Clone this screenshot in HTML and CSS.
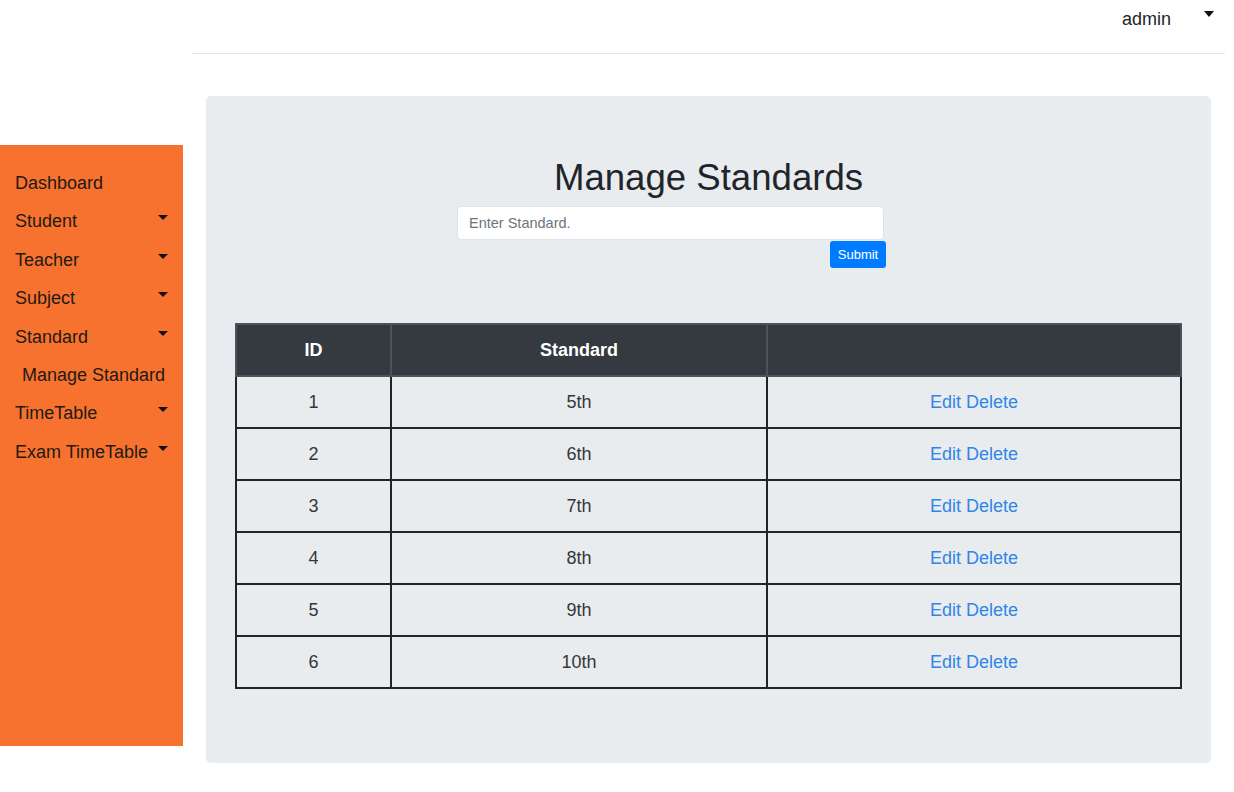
FILE: index.html
```html
<!DOCTYPE html>
<html lang="en">
<head>
<meta charset="utf-8">
<title>Manage Standards</title>
<link rel="stylesheet" href="styles.css">
</head>
<body>
<div class="page">
  <aside class="sidebar">
    <div class="nav-item"><span>Dashboard</span></div>
    <div class="nav-item"><span>Student</span><i class="caret"></i></div>
    <div class="nav-item"><span>Teacher</span><i class="caret"></i></div>
    <div class="nav-item"><span>Subject</span><i class="caret"></i></div>
    <div class="nav-item"><span>Standard</span><i class="caret"></i></div>
    <div class="nav-item sub"><span>Manage Standard</span></div>
    <div class="nav-item"><span>TimeTable</span><i class="caret"></i></div>
    <div class="nav-item"><span>Exam TimeTable</span><i class="caret"></i></div>
  </aside>
  <main class="main">
    <header class="topbar">
      <span class="user">admin</span><i class="caret top-caret"></i>
    </header>
    <section class="jumbo">
      <h1 class="title">Manage Standards</h1>
      <form class="std-form">
        <input class="std-input" type="text" placeholder="Enter Standard.">
        <div class="btn-row"><button class="btn" type="button">Submit</button></div>
      </form>
      <table class="grid">
        <thead>
          <tr><th class="c-id">ID</th><th class="c-std">Standard</th><th class="c-act"></th></tr>
        </thead>
        <tbody>
          <tr><td>1</td><td>5th</td><td><a href="#">Edit</a> <a href="#">Delete</a></td></tr>
          <tr><td>2</td><td>6th</td><td><a href="#">Edit</a> <a href="#">Delete</a></td></tr>
          <tr><td>3</td><td>7th</td><td><a href="#">Edit</a> <a href="#">Delete</a></td></tr>
          <tr><td>4</td><td>8th</td><td><a href="#">Edit</a> <a href="#">Delete</a></td></tr>
          <tr><td>5</td><td>9th</td><td><a href="#">Edit</a> <a href="#">Delete</a></td></tr>
          <tr><td>6</td><td>10th</td><td><a href="#">Edit</a> <a href="#">Delete</a></td></tr>
        </tbody>
      </table>
    </section>
  </main>
</div>
</body>
</html>
```
FILE: styles.css
```css
* { box-sizing: border-box; }
html, body { margin: 0; padding: 0; background: #fff; }
body {
  font-family: "Liberation Sans", Arial, sans-serif;
  color: #212529;
  font-size: 18px;
}
.page {
  display: flex;
  align-items: flex-start;
  width: 1234px;
}
.sidebar {
  width: 183px;
  flex: none;
  margin-top: 145px;
  height: 601px;
  background: #f7722f;
  padding-top: 19px;
}
.nav-item {
  display: flex;
  justify-content: space-between;
  align-items: flex-start;
  height: 38.4px;
  line-height: 38.4px;
  padding: 0 15px;
  color: #231a14;
  font-size: 18px;
}
.nav-item.sub { padding-left: 22px; }
.caret {
  display: block;
  width: 0;
  height: 0;
  border-left: 5px solid transparent;
  border-right: 5px solid transparent;
  border-top: 5px solid #111;
  margin-top: 13px;
}
.main {
  flex: 1;
  min-width: 0;
}
.topbar {
  margin: 0 9px;
  height: 54px;
  border-bottom: 1px solid #e3e5e8;
  display: flex;
  justify-content: flex-end;
  align-items: flex-start;
  padding: 8px 11px 0 0;
}
.user {
  line-height: 22px;
  font-size: 18px;
  color: #212529;
}
.top-caret {
  margin-left: 33px;
  margin-top: 3px;
  border-top-width: 6px;
}
.jumbo {
  margin: 42px 23px 0;
  height: 667px;
  background: #e9ecef;
  border-radius: 5px;
  padding: 60px 29px 0;
}
.title {
  margin: 0;
  text-align: center;
  font-size: 36.6px;
  font-weight: 400;
  line-height: 43px;
  color: #212529;
}
.std-form {
  margin: 7px 0 0 222px;
  width: 429px;
}
.std-input {
  display: block;
  width: 427px;
  height: 34px;
  border: 1px solid #dfe2e6;
  border-radius: 4px;
  background: #fff;
  padding: 0 11px;
  font-family: "Liberation Sans", Arial, sans-serif;
  font-size: 14.5px;
  color: #495057;
  outline: none;
}
.std-input::placeholder { color: #6c757d; }
.btn-row {
  display: flex;
  justify-content: flex-end;
  margin-top: 1px;
}
.btn {
  width: 56px;
  height: 27px;
  border: none;
  border-radius: 3px;
  background: #007bff;
  color: #fff;
  font-family: "Liberation Sans", Arial, sans-serif;
  font-size: 13px;
  padding: 0;
}
.grid {
  margin-top: 55px;
  width: 947px;
  border-collapse: collapse;
  table-layout: fixed;
  font-size: 18px;
}
.grid th {
  background: #343a40;
  color: #fff;
  font-weight: 700;
  height: 52px;
  border: 2px solid #4b525a;
  text-align: center;
}
.c-id { width: 155px; }
.c-std { width: 376px; }
.grid td {
  height: 52px;
  border: 2px solid #212529;
  text-align: center;
  color: #33373b;
}
.grid td a {
  color: #2f86e6;
  text-decoration: none;
}
```
